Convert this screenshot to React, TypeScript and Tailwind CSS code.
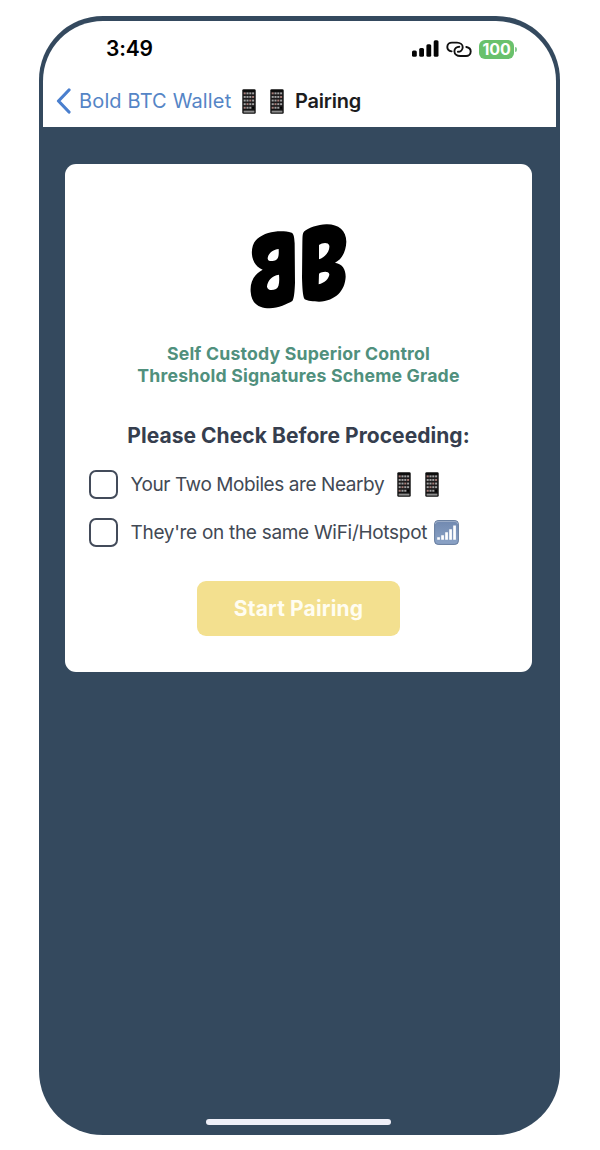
import React from "react";

function Phone() {
  return (
    <svg viewBox="0 0 14 25" className="h-[25px] w-[14px] shrink-0" aria-hidden="true">
      <rect x="0.3" y="0.3" width="13.4" height="24.4" rx="1.3" fill="#0c0c0c" />
      <rect x="1.2" y="2.8" width="11.6" height="17.6" fill="#1d1b1c" />
      {[3.4, 7, 10.6, 14.2, 17.8].map((y, row) =>
        [1.7, 4.5, 7.3, 10.1].map((x, col) => (
          <rect
            key={`${x}-${y}`}
            x={x}
            y={y}
            width="2"
            height="1.9"
            fill={row === 4 && col === 3 ? "#000" : (row + col) % 4 === 0 ? "#a87d78" : "#a2a2a2"}
          />
        )),
      )}
      <rect x="1.6" y="21.6" width="10.8" height="2" fill="#8d8d8d" />
    </svg>
  );
}

function Logo() {
  return (
    <svg viewBox="60 51 294 258" className="h-[86px] w-[98px]" aria-label="Bold BTC">
      <path
        fill="#000"
        fillRule="evenodd"
        d="M185 80C151 71 108 77 82 98C57 119 59 177 98 191C69 207 60 232 62 257C64 292 86 307 119 307C145 306 172 294 187 285C192 278 194 257 195 230L194 112C193 96 192 84 185 80ZM146 129C128 131 113 144 113 158C115 168 130 166 138 162C146 158 147 145 146 129ZM147 206C125 208 112 226 111 242C113 254 127 254 138 249C147 244 149 228 147 206Z"
      />
      <path
        fill="#000"
        fillRule="evenodd"
        d="M223 76C236 65 263 56 289 55C324 54 349 73 349 107C348 136 336 160 315 170C338 174 347 190 347 212C345 254 317 284 267 287C251 287 232 285 224 280C218 270 217 245 216 215L217 115C218 96 216 83 223 76ZM267 117L267 160C284 155 300 136 298 119C295 108 277 110 267 117ZM267 203L266 235C283 232 298 217 298 205C295 194 277 197 267 203Z"
      />
    </svg>
  );
}

function StatusIcons() {
  return (
    <div className="flex h-5 items-center">
      <svg viewBox="0 0 27 18" className="h-[18px] w-[27px]" fill="#050505" aria-hidden="true">
        <rect x="0" y="10.5" width="4.8" height="6.3" rx="1.5" />
        <rect x="7.2" y="8" width="4.8" height="8.8" rx="1.5" />
        <rect x="14.4" y="4.2" width="4.8" height="12.6" rx="1.5" />
        <rect x="21.7" y="0.3" width="4.8" height="16.5" rx="1.5" />
      </svg>
      <svg
        viewBox="0 0 26 17"
        className="ml-[7px] h-[17px] w-[26px]"
        fill="none"
        stroke="#111"
        strokeWidth="1.9"
        strokeLinecap="round"
        aria-hidden="true"
      >
        <path d="M5.6 10.4C3 9.9 1.3 8 1.3 6C1.3 3.4 3.4 1.6 6 1.6H11C14.2 1.6 16.7 3.6 16.7 6.2C16.7 8.8 14.6 10.8 11.9 10.8" />
        <path d="M20.3 6C22.9 6.4 24.7 8.3 24.7 10.5C24.7 13.1 22.6 15 20 15H14.2C11 15 8.4 13 8.4 10.3C8.4 7.7 10.6 5.8 13.3 5.8" />
      </svg>
      <div className="ml-[7px] flex h-[19px] w-[35px] items-center justify-center rounded-[6px] bg-[#69c16c] font-['Inter'] text-[16px] font-bold tracking-[-0.1px] text-white">
        100
      </div>
      <div className="ml-px h-[5px] w-[2px] rounded-r-full bg-[#86c990]" />
    </div>
  );
}

function SignalEmoji() {
  return (
    <svg viewBox="0 0 25 25" className="h-[25px] w-[25px] shrink-0" aria-hidden="true">
      <defs>
        <linearGradient id="signal" x1="0" y1="0" x2="0" y2="1">
          <stop stopColor="#7189b0" />
          <stop offset="1" stopColor="#8ba3c6" />
        </linearGradient>
      </defs>
      <rect x="0.6" y="0.6" width="23.8" height="23.8" rx="3.5" fill="url(#signal)" stroke="#657b9d" strokeWidth="1" />
      <path d="M1.3 4Q1.3 1.5 4 1.5H21Q23.7 1.5 23.7 4" fill="none" stroke="#a4b4cc" strokeWidth="0.8" />
      <path d="M3.2 17.2h2.7v2.6H3.2zM7.2 15.2h2.7v4.6H7.2zM11.2 12.2h2.7v7.6h-2.7zM15.2 9.2h2.7v10.6h-2.7zM19.2 5.4h2.7v14.4h-2.7z" fill="#fff" />
    </svg>
  );
}

function CheckRow({ children }: { children: React.ReactNode }) {
  return (
    <label className="flex h-[29px] items-center">
      <input
        type="checkbox"
        className="h-[29px] w-[29px] shrink-0 appearance-none rounded-[7px] border-2 border-[#434b5a] bg-white"
      />
      <span className="ml-[13px] flex items-center whitespace-nowrap text-[19px] leading-6 text-[#424954]">{children}</span>
    </label>
  );
}

export default function App() {
  return (
    <main className="flex h-[1150px] w-[600px] items-start bg-white pl-[39px] pt-[16px] font-['Inter',sans-serif]">
      <div className="flex h-[1119px] w-[521px] flex-col items-center overflow-hidden rounded-[64px] bg-[#34495e] px-1 pt-[5px]">
        <header className="flex h-[106px] w-[513px] shrink-0 flex-col rounded-t-[60px] bg-white">
          <div className="flex h-[56px] items-center justify-between pl-[63px] pr-[39px]">
            <span className="text-[21px] font-semibold leading-6 tracking-[-0.2px] text-black">3:49</span>
            <StatusIcons />
          </div>
          <nav className="flex h-[48px] items-center pl-[13px]">
            <svg viewBox="0 0 15 26" className="h-[26px] w-[15px]" aria-hidden="true">
              <path d="M13 2L2.5 13L13 24" fill="none" stroke="#4a7fce" strokeWidth="3.2" strokeLinecap="round" strokeLinejoin="round" />
            </svg>
            <span className="ml-[8px] w-[154px] whitespace-nowrap text-[20px] leading-6 tracking-[0.15px] text-[#5585c6]">Bold BTC Wallet</span>
            <span className="ml-[9px] flex gap-[14px]"><Phone /><Phone /></span>
            <h1 className="ml-[11px] text-[20px] font-semibold leading-6 tracking-[-0.2px] text-[#1c1c1e]">Pairing</h1>
          </nav>
        </header>
        <section className="mr-[2px] mt-[37px] flex h-[508px] w-[467px] shrink-0 flex-col items-center rounded-[11px] bg-white pt-[59px]">
          <Logo />
          <p className="mt-[34px] whitespace-nowrap text-center text-[17.7px] font-bold leading-[22px] tracking-[0.18px] text-[#50907d]">
            Self Custody Superior Control<br />Threshold Signatures Scheme Grade
          </p>
          <h2 className="mt-[36px] whitespace-nowrap text-[21px] font-bold leading-[26px] tracking-[0.05px] text-[#363e4e]">
            Please Check Before Proceeding:
          </h2>
          <div className="mt-[21px] flex w-full flex-col gap-[19px] pl-[23.5px]">
            <CheckRow>
              <span className="w-[254px] tracking-[-0.42px]">Your Two Mobiles are Nearby</span>
              <span className="ml-[12px] flex gap-[14px]"><Phone /><Phone /></span>
            </CheckRow>
            <CheckRow>
              <span className="w-[297px] tracking-[-0.3px]">They're on the same WiFi/Hotspot</span>
              <span className="ml-[6px]"><SignalEmoji /></span>
            </CheckRow>
          </div>
          <button className="mt-[34px] h-[55px] w-[203px] rounded-[9px] bg-[#f3e08f] text-[21px] font-bold tracking-[0.15px] text-[#fffdf1]">
            Start Pairing
          </button>
        </section>
        <div className="mb-[10px] mr-[2px] mt-auto h-[6px] w-[185px] shrink-0 rounded-full bg-[#eeeff8]" />
      </div>
    </main>
  );
}
